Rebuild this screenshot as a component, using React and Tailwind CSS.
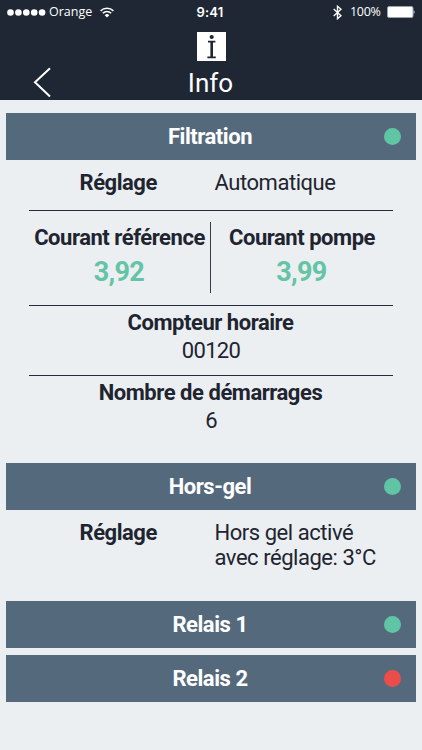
const sections = [
  { id: 'filtration', titre: 'Filtration', actif: true },
  { id: 'hors-gel', titre: 'Hors-gel', actif: true },
  { id: 'relais-1', titre: 'Relais 1', actif: true },
  { id: 'relais-2', titre: 'Relais 2', actif: false },
]

function StatusBar() {
  return (
    <div className="flex h-6 items-center justify-between pl-[7px] pr-[7px] text-white">
      <div className="flex w-[150px] items-center">
        <svg className="h-[7px] w-[39px]" viewBox="0 0 39 7" fill="currentColor">
          <circle cx="3.5" cy="3.5" r="3.3" />
          <circle cx="11.4" cy="3.5" r="3.3" />
          <circle cx="19.3" cy="3.5" r="3.3" />
          <circle cx="27.2" cy="3.5" r="3.3" />
          <circle cx="35.1" cy="3.5" r="3.3" />
        </svg>
        <span className="ml-[3px] w-[43px] whitespace-nowrap font-['Open_Sans','Noto_Sans',sans-serif] text-[12.5px] leading-4">Orange</span>
        <svg className="ml-[8px] h-[11px] w-[14px]" viewBox="0 0 14 11" fill="none" stroke="currentColor" strokeWidth="1.5">
          <path d="M.6 3.9a9.1 9.1 0 0 1 12.8 0" />
          <path d="M2.8 6.2a6 6 0 0 1 8.4 0" />
          <path d="M7 10.6 4.7 8.2a3.3 3.3 0 0 1 4.6 0z" fill="currentColor" stroke="none" />
        </svg>
      </div>
      <span className="pr-[2px] font-['Inter',sans-serif] text-[13px] font-semibold leading-4 tracking-[0.25px]">9:41</span>
      <div className="flex w-[150px] items-center justify-end">
        <svg className="h-[15px] w-[9px]" viewBox="0 0 9 15" fill="none" stroke="currentColor" strokeWidth="1.4">
          <path d="M.7 4.1 8 10.7 4.5 13.7V1.3L8 4.3.7 10.9" />
        </svg>
        <span className="ml-[8px] w-[31px] whitespace-nowrap font-['Open_Sans','Noto_Sans',sans-serif] text-[12.5px] leading-4 tracking-[-0.3px]">100%</span>
        <svg className="ml-[6px] h-[12px] w-[28px]" viewBox="0 0 28 12">
          <rect x=".5" y=".5" width="25.5" height="11" rx="1.5" fill="#fff" stroke="#9da3aa" />
          <path d="M26.6 4.2c1.4.5 1.4 3.1 0 3.6z" fill="#d5d9dd" />
        </svg>
      </div>
    </div>
  )
}

function Header() {
  return (
    <header className="h-[100px] bg-[#1e2733] text-white">
      <StatusBar />
      <div className="grid h-[76px] grid-cols-[1fr_60px_1fr]">
        <button className="ml-[33px] mt-[43px] h-[31px] w-[18px]" aria-label="Retour">
          <svg className="h-[31px] w-[18px]" viewBox="0 0 18 31" fill="none" stroke="currentColor" strokeWidth="2">
            <path d="M17 1.2 2 15.2 17 29.4" />
          </svg>
        </button>
        <div className="flex flex-col items-center pt-2">
          <svg className="h-[29px] w-[29px]" viewBox="0 0 29 29">
            <path fill="#fff" d="M0 0h29v29H0z" />
            <circle cx="14.7" cy="5" r="2.1" fill="#1e2733" />
            <path fill="#1e2733" d="M11 8.8h7.4v1.7H16v13.9h2.8v1.8h-8.4v-1.8h3V10.5H11z" />
          </svg>
          <h1 className="mt-[6px] pr-px text-[26px] leading-8">Info</h1>
        </div>
      </div>
    </header>
  )
}

function Bandeau({ section }) {
  return (
    <div className="grid h-[47px] grid-cols-[1fr_auto_1fr] items-center bg-[#55697d] pl-[14px] pr-[15px]">
      <h2 className="col-start-2 pr-px text-[22px] font-bold leading-6 tracking-[-0.45px] text-white">{section.titre}</h2>
      <span className={`h-[17px] w-[17px] justify-self-end rounded-full ${section.actif ? 'bg-[#5fc5a5]' : 'bg-[#eb4d4b]'}`} />
    </div>
  )
}

function Reglage({ children }) {
  return (
    <div className="grid grid-cols-[135px_1fr] pl-[73.5px] pt-[10px] text-[22px] leading-[25px] tracking-[-0.46px]">
      <span className="font-bold">Réglage</span>
      <span>{children}</span>
    </div>
  )
}

function Courant({ label, valeur }) {
  return (
    <div className="pt-px text-center">
      <p className="whitespace-nowrap text-[22px] font-bold leading-[30px] tracking-[-0.46px]">{label}</p>
      <p className="mt-[3px] pr-px text-[27px] font-bold leading-8 tracking-[-0.7px] text-[#64c4a5]">{valeur}</p>
    </div>
  )
}

function Compteur({ label, valeur }) {
  return (
    <div className="mx-[23px] h-[70px] border-t border-[#252c3b] pt-[3px] text-center text-[22px] leading-7">
      <p className="pr-px font-bold tracking-[-0.46px]">{label}</p>
      <p className="tracking-[-0.7px]">{valeur}</p>
    </div>
  )
}

export default function App() {
  const [filtration, horsGel, relais1, relais2] = sections

  return (
    <div className="h-[750px] w-[422px] overflow-hidden bg-[#ebeff1] font-['Roboto',sans-serif] text-[#1e2430]">
      <Header />
      <main className="px-[6px] pt-[13px]">
        <section className="h-[350px]">
          <Bandeau section={filtration} />
          <div className="h-[50px]">
            <Reglage>Automatique</Reglage>
          </div>
          <div className="mx-[23px] h-[95px] border-t border-[#252c3b] pt-[11px]">
            <div className="grid h-[71px] grid-cols-[182px_1fr]">
              <div className="border-r border-[#353c49]">
                <Courant label="Courant référence" valeur="3,92" />
              </div>
              <Courant label="Courant pompe" valeur="3,99" />
            </div>
          </div>
          <Compteur label="Compteur horaire" valeur="00120" />
          <Compteur label="Nombre de démarrages" valeur="6" />
        </section>

        <section className="h-[138px]">
          <Bandeau section={horsGel} />
          <Reglage>
            Hors gel activé
            <br />
            avec réglage: 3°C
          </Reglage>
        </section>

        <div className="flex flex-col gap-[7px]">
          <Bandeau section={relais1} />
          <Bandeau section={relais2} />
        </div>
      </main>
    </div>
  )
}
